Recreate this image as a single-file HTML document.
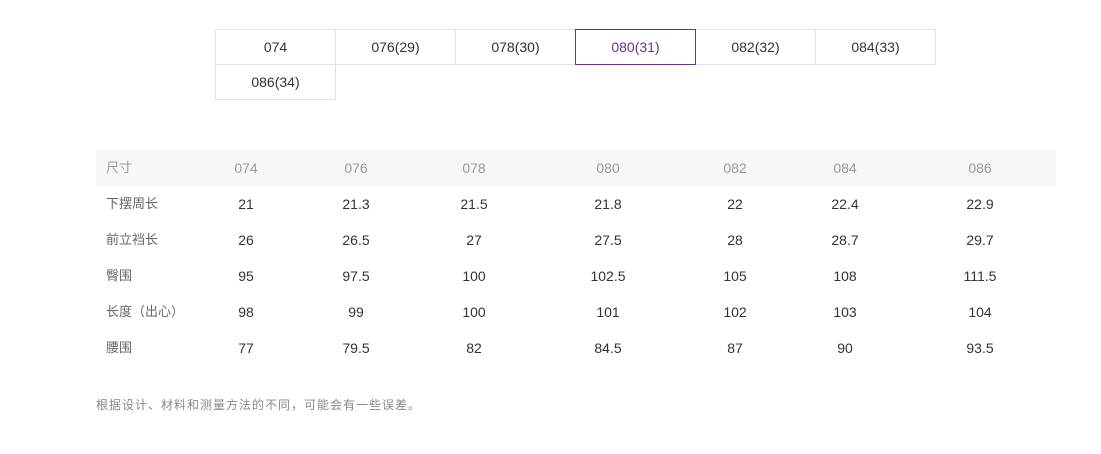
<!DOCTYPE html>
<html><head><meta charset="utf-8"><style>
body{margin:0;width:1101px;height:454px;background:#fff;font-family:"Liberation Sans","Noto Sans CJK SC",sans-serif;position:relative;overflow:hidden}
.b{position:absolute;width:119px;height:34px;border:1px solid #e2e2e2;text-align:center;line-height:34px;font-size:14px;color:#333;box-sizing:content-box}
.sel{border-color:#6b2f95;color:#6b2f95;z-index:2}
.hdr{position:absolute;left:96px;top:150px;width:960px;height:36px;background:#f7f7f7}
.c{position:absolute;width:100px;margin-left:-50px;text-align:center;font-size:14px;color:#333;line-height:36px}
.h{color:#999}
.l{position:absolute;left:106px;font-size:13px;color:#666;line-height:36px}
.f{position:absolute;left:96px;top:396px;font-size:12px;color:#888;line-height:18px;letter-spacing:1px}
</style></head><body>
<div class="b" style="left:215px;top:29px">074</div>
<div class="b" style="left:335px;top:29px">076(29)</div>
<div class="b" style="left:455px;top:29px">078(30)</div>
<div class="b sel" style="left:575px;top:29px">080(31)</div>
<div class="b" style="left:695px;top:29px">082(32)</div>
<div class="b" style="left:815px;top:29px">084(33)</div>
<div class="b" style="left:215px;top:64px">086(34)</div>
<div class="hdr"></div>
<div id="t"></div>
<script>
var xs=[246,356,474,608,735,845,980];
var rows=[["尺寸","074","076","078","080","082","084","086"],
["下摆周长","21","21.3","21.5","21.8","22","22.4","22.9"],
["前立裆长","26","26.5","27","27.5","28","28.7","29.7"],
["臀围","95","97.5","100","102.5","105","108","111.5"],
["长度（出心）","98","99","100","101","102","103","104"],
["腰围","77","79.5","82","84.5","87","90","93.5"]];
var h="";
rows.forEach(function(r,i){var y=150+i*36;
h+='<div class="l'+(i==0?' h':'')+'" style="top:'+y+'px;'+(i==0?'color:#999':'')+'">'+r[0]+'</div>';
for(var j=1;j<8;j++)h+='<div class="c'+(i==0?' h':'')+'" style="left:'+xs[j-1]+'px;top:'+y+'px">'+r[j]+'</div>';});
document.getElementById("t").innerHTML=h;
</script>
<div class="f">根据设计、材料和测量方法的不同，可能会有一些误差。</div>
</body></html>
